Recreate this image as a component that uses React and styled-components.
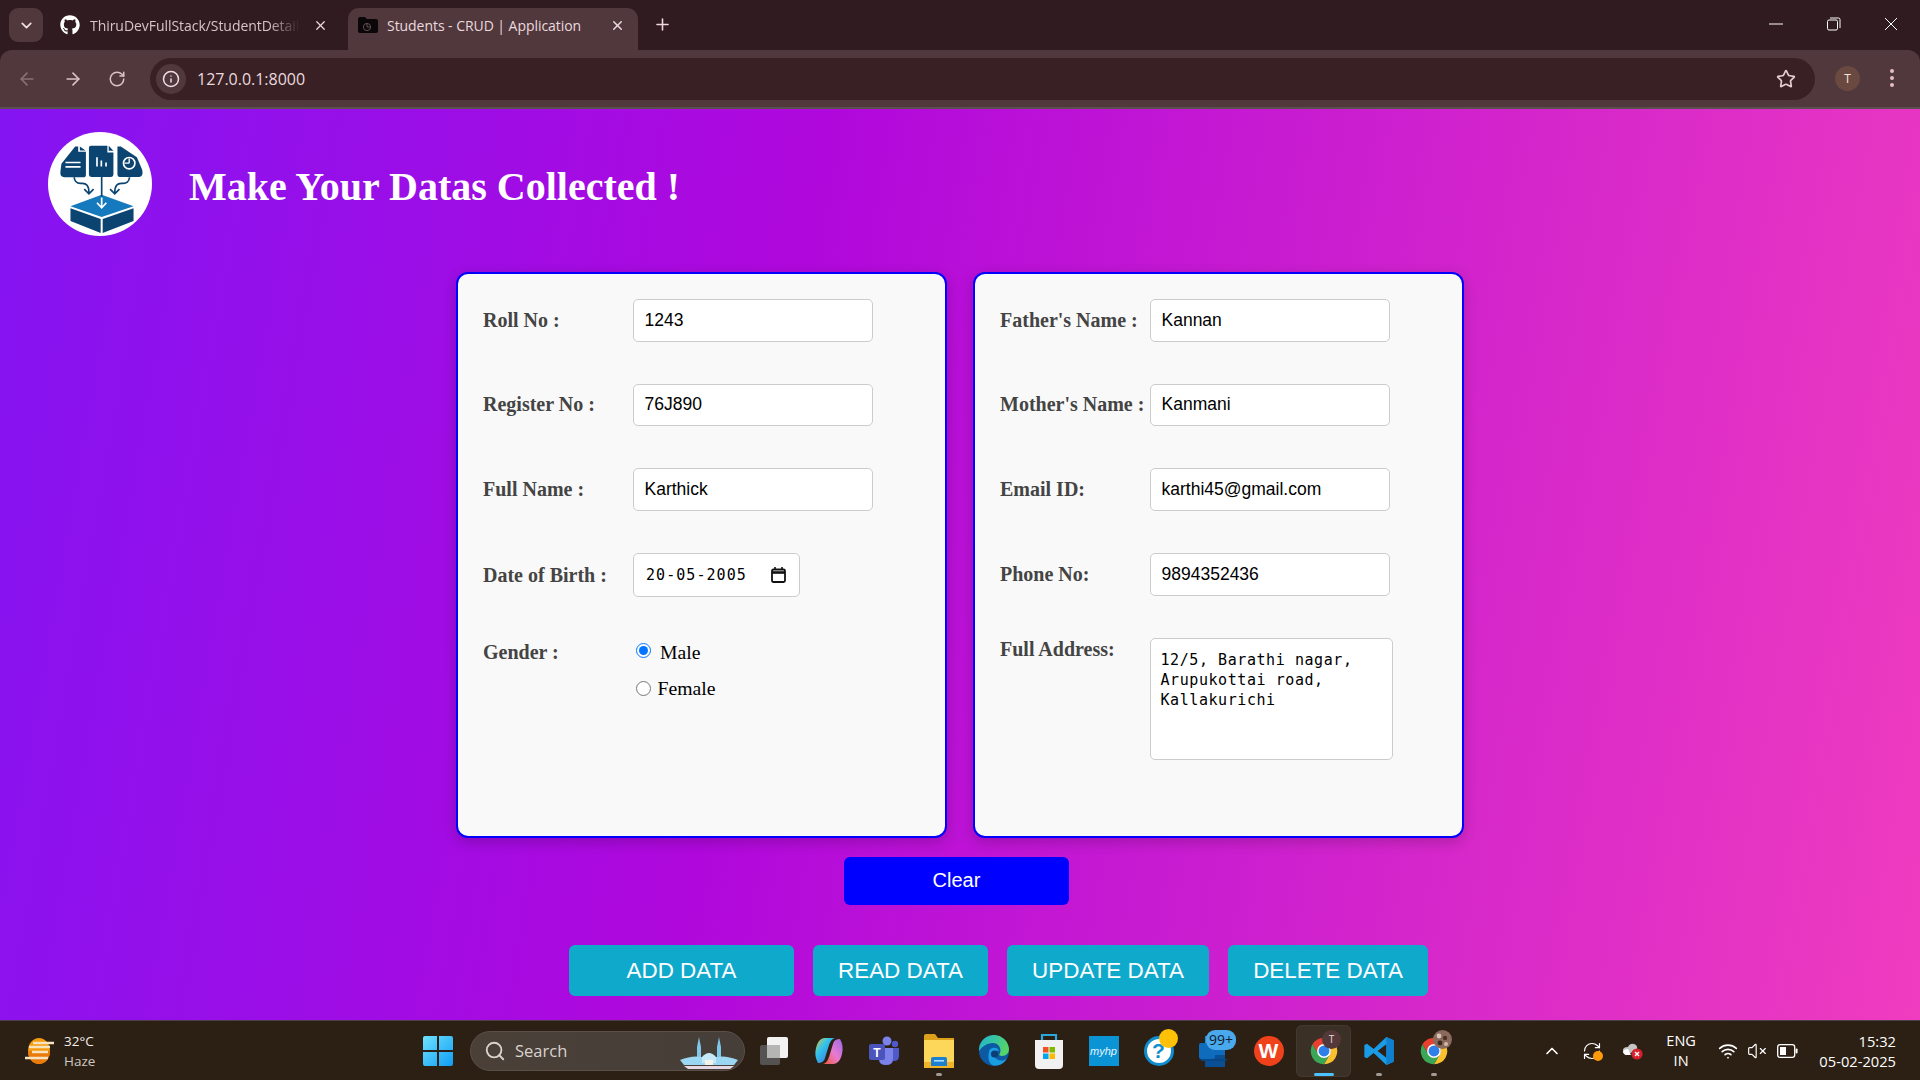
import React from "react";
import styled, { createGlobalStyle } from "styled-components";
import { ArrowLeft, ArrowRight, RotateCw, Info, Star, Plus, X, ChevronDown, ChevronUp, Search, Wifi, VolumeX, RefreshCw } from "lucide-react";
import { FaGithub } from "react-icons/fa";

const Global = createGlobalStyle`
  html, body { margin: 0; padding: 0; height: 100%; overflow: hidden; background:#2f1b20; }
  * { box-sizing: border-box; }
  #root { height: 100%; }
`;
const UI = `"Open Sans", "Noto Sans", sans-serif`;
const Screen = styled.div`width:1920px;height:1080px;display:flex;flex-direction:column;overflow:hidden;background:#2f1b20;`;

const TabStrip = styled.div`height:50px;background:#2f1b20;display:flex;align-items:flex-start;padding:8px 0 0 9px;font-family:${UI};`;
const TabMenu = styled.div`width:34px;height:34px;border-radius:9px;background:#50383d;color:#f0dfe2;display:flex;align-items:center;justify-content:center;`;
const Tab = styled.div`
  height:42px;display:flex;align-items:center;flex:none;position:relative;
  width:${p=>p.$w}px;margin-left:${p=>p.$ml}px;padding:0 0 8px ${p=>p.$pl}px;
  border-radius:11px 11px 0 0;background:${p=>p.$active?"#50383d":"transparent"};
  color:${p=>p.$active?"#eadadd":"#d8c4c8"};font-size:14px;letter-spacing:-.05px;
`;
const TabTitle = styled.span`
  margin-left:${p=>p.$ml}px;width:${p=>p.$w}px;white-space:nowrap;overflow:hidden;flex:none;
  ${p=>p.$fade?"mask-image:linear-gradient(to right,#000 85%,transparent);":""}
`;
const TabClose = styled.span`margin-left:auto;display:flex;margin-right:${p=>p.$mr}px;color:#eadadd;`;
const NewTab = styled.div`margin:7px 0 0 15px;color:#f0d8dc;display:flex;`;
const WinControls = styled.div`margin-left:auto;display:flex;color:#fff;margin-right:22px;margin-top:9px;gap:43.5px;align-items:center;height:14px;`;

const Toolbar = styled.div`
  height:59px;background:#50383d;border-radius:12px 12px 0 0;display:flex;align-items:flex-start;
  padding-top:8px;position:relative;border-bottom:2px solid #5c4f50;font-family:${UI};flex:none;
`;
const NavBtn = styled.span`width:${p=>p.$w||45}px;height:42px;display:flex;align-items:center;justify-content:center;color:${p=>p.$dim?"#8b7074":"#dcc2c7"};flex:none;`;
const AddressBar = styled.div`width:1665px;height:42px;margin-left:8px;background:#392025;border-radius:21px;display:flex;align-items:center;padding-left:6px;flex:none;`;
const InfoChip = styled.span`width:30px;height:30px;border-radius:50%;background:#50383d;color:#f0dfe2;display:flex;align-items:center;justify-content:center;flex:none;`;
const Url = styled.span`margin-left:11px;color:#eadadd;font-size:16px;letter-spacing:-.02px;`;
const StarWrap = styled.span`margin-left:auto;margin-right:19px;color:#e6cdd2;display:flex;`;
const Avatar = styled.span`width:25px;height:25px;border-radius:50%;background:#6a4a40;color:#f3e6e0;font-size:12px;display:flex;align-items:center;justify-content:center;margin:8px 0 0 20px;flex:none;`;
const Dots = styled.span`display:flex;flex-direction:column;gap:3px;margin:11px 0 0 30px;`;
const Dot = styled.i`width:4px;height:4px;border-radius:50%;background:#e8bcc6;display:block;`;

const Page = styled.main`
  flex:1;min-height:0;display:flex;flex-direction:column;
  background:linear-gradient(100deg,#8414f2 0%,#b008dc 40%,#f03cbf 100%);
`;
const Header = styled.header`display:flex;align-items:center;padding:23px 0 0 48px;gap:37px;`;
const LogoDisc = styled.svg`width:104px;height:104px;flex:none;display:block;`;
const Title = styled.h1`margin:5px 0 0;color:#fff;font:bold 40px "Liberation Serif",serif;`;
const Panels = styled.div`display:flex;justify-content:center;gap:26px;margin-top:36px;`;
const Panel = styled.section`
  width:491px;height:566px;background:#f9f9f9;border:2px solid #0000ff;border-radius:12px;padding:25px;
  box-shadow:0 4px 14px rgba(0,0,0,.2);display:flex;flex-direction:column;gap:42px;
`;
const Row = styled.div`display:flex;align-items:${p=>p.$top?"flex-start":"center"};`;
const Label = styled.label`
  width:150px;flex:none;color:#444;font:bold 20px "Liberation Serif",serif;
  ${p=>p.$offset?`margin-top:${p.$offset}px;`:""}
`;
const Field = styled.input`
  width:240px;height:42.67px;border:1px solid #ccc;border-radius:5px;background:#fff;color:#000;
  font:17.5px "Liberation Sans",sans-serif;padding:0 10.5px;outline:none;
`;
const DateBox = styled.div`width:167px;height:44.3px;border:1px solid #ccc;border-radius:5px;background:#fff;display:flex;align-items:center;padding:0 13px 0 12px;`;
const DateText = styled.input`
  width:115px;border:0;outline:none;padding:0;background:transparent;color:#000;
  font:15px "DejaVu Sans Mono",monospace;letter-spacing:1.05px;
`;
const CalIcon = styled.svg`margin-left:auto;flex:none;display:block;`;
const Area = styled.textarea`
  width:243px;height:122px;border:1px solid #ccc;border-radius:5px;background:#fff;color:#000;resize:none;outline:none;
  font:15px/20px "DejaVu Sans Mono",monospace;letter-spacing:.57px;padding:11px 9.5px;overflow:hidden;
`;
const RadioStack = styled.div`display:flex;flex-direction:column;gap:12px;margin-top:1px;`;
const RadioRow = styled.label`display:flex;align-items:center;color:#000;font:19.7px "Liberation Serif",serif;height:24px;`;
const Radio = styled.input`width:15px;height:15px;margin:0 0 ${p=>p.$lift||0}px 3px;accent-color:#0075ff;flex:none;`;
const RadioText = styled.span`margin-left:${p=>p.$ml}px;`;
const ClearBtn = styled.button`
  display:block;width:225px;height:48px;margin:19px 0 0 844px;border:0;border-radius:6px;background:#0000ff;color:#fff;
  font:20px "Liberation Sans",sans-serif;padding:0 0 2px;
`;
const Actions = styled.div`display:flex;gap:19px;margin-top:40px;padding-left:569px;`;
const ActionBtn = styled.button`
  height:51px;width:${p=>p.$w}px;border:0;border-radius:6px;background:#0fa9cc;color:#fff;padding:0;flex:none;
  font:22.4px "Liberation Sans",sans-serif;
`;

const Taskbar = styled.footer`
  height:60px;background:#2c1f14;border-top:1px solid #4b4048;display:flex;align-items:center;font-family:${UI};color:#f2efec;position:relative;flex:none;
`;
const Weather = styled.div`display:flex;align-items:center;width:423px;padding-left:24px;flex:none;`;
const WeatherText = styled.div`margin-left:9px;font-size:13.5px;line-height:20px;`;
const WeatherSub = styled.div`color:#cfc8c0;`;
const SearchBox = styled.div`
  width:275px;height:40px;margin-left:17px;border-radius:20px;border:1px solid #5b5049;background:linear-gradient(90deg,#4a4038,#463e38);
  display:flex;align-items:center;padding-left:13px;color:#d9d3ce;font-size:16.5px;flex:none;position:relative;
`;
const SearchLabel = styled.span`margin-left:9px;`;
const Scene = styled.span`position:absolute;right:6px;bottom:1px;display:flex;`;
const Apps = styled.div`display:flex;margin-left:1px;flex:none;`;
const AppCell = styled.div`
  width:55px;height:52px;display:flex;align-items:center;justify-content:center;position:relative;flex:none;border-radius:6px;
  ${p=>p.$active?"background:#3b3026;box-shadow:inset 0 0 0 1px #44392f;":""}
`;
const RunDot = styled.i`
  position:absolute;bottom:1px;left:50%;transform:translateX(-50%);height:3px;border-radius:2px;display:block;
  width:${p=>p.$on?20:6}px;background:${p=>p.$on?"#4cc2ff":"#a09a95"};
`;
const CountBadge = styled.span`position:absolute;top:5px;right:5px;background:#4aa8ec;color:#10202c;font-size:14px;line-height:16px;height:20px;padding:2px 3px;border-radius:9px;`;
const MiniAvatar = styled.span`position:absolute;top:5px;right:10px;width:19px;height:19px;border-radius:50%;background:#54393a;color:#e8dcd8;font-size:10px;display:flex;align-items:center;justify-content:center;`;
const PhotoBadge = styled.svg`position:absolute;top:5px;right:9px;`;
const Tray = styled.div`position:absolute;right:0;top:0;height:59px;display:flex;align-items:center;color:#fff;`;
const TraySlot = styled.span`display:flex;margin-right:${p=>p.$mr}px;position:relative;`;
const TrayDot = styled.i`position:absolute;right:-1px;bottom:0;width:10px;height:10px;border-radius:50%;background:#ff9a0a;display:block;`;
const Lang = styled.div`font-size:14.5px;line-height:20px;text-align:center;margin-right:22.5px;`;
const Clock = styled.div`font-size:14.7px;line-height:20px;text-align:right;margin-right:24px;`;
const MyHp = styled.span`width:30px;height:30px;background:#0a94d6;color:#e8f6fc;font:italic 11px "Liberation Sans",sans-serif;display:flex;align-items:center;justify-content:center;`;
const WpsDisc = styled.span`width:30px;height:30px;border-radius:50%;background:#f0421a;color:#fff;font:bold 21px "Liberation Sans",sans-serif;display:flex;align-items:center;justify-content:center;`;
const HelpDisc = styled.span`width:30px;height:30px;border-radius:50%;background:#fff;border:3px solid #0f8ecf;color:#0f8ecf;font:bold 21px "Liberation Sans",sans-serif;display:flex;align-items:center;justify-content:center;`;
const HelpBubble = styled.i`position:absolute;top:4px;right:8px;width:19px;height:19px;border-radius:50%;background:#ffc107;display:block;`;

const Logo = () => (
  <LogoDisc viewBox="55 37 310 310">
    <circle cx="210" cy="192" r="155" fill="#fff" />
    <path d="M95 132 L136 80 L145 80 L145 96 L168 96 L168 165 Q168 172 160 172 L104 172 Q90 172 92 155Z M150 80 L167 92 L150 92Z" fill="#0b4470" />
    <path d="M183 78 L232 78 L232 98 L250 98 L250 164 Q250 171 243 171 L184 171 Q177 171 177 164 L177 84 Q177 78 183 78Z M236 78 L250 93 L236 93Z" fill="#0b4470" />
    <path d="M262 80 L272 80 L320 112 L336 150 Q340 171 326 171 L268 171 Q262 171 262 164Z" fill="#0b4470" />
    <path d="M107 128H152M107 141H152" stroke="#fff" strokeWidth="5" />
    <path d="M201 112V140M214 122V140M228 128V140" stroke="#fff" strokeWidth="5" />
    <circle cx="297" cy="130" r="17" fill="none" stroke="#fff" strokeWidth="5" />
    <path d="M297 130V116M297 130H283" stroke="#fff" strokeWidth="4" />
    <path d="M133 172 Q135 192 155 190 Q177 188 177 218 M163 207 L177 221 L191 207" fill="none" stroke="#0b4470" strokeWidth="5" />
    <path d="M298 172 Q296 192 276 190 Q254 188 254 218 M240 207 L254 221 L268 207" fill="none" stroke="#0b4470" strokeWidth="5" />
    <path d="M122 258 L215 224 L310 258 L215 290Z" fill="#1479bd" />
    <path d="M122 264 L212 296 L212 338 L122 302Z M218 296 L310 264 L310 302 L218 338Z" fill="#0b4470" />
    <path d="M215 170V230" fill="none" stroke="#0b4470" strokeWidth="5" />
    <path d="M215 232V262 M201 248 L215 263 L229 248" fill="none" stroke="#fff" strokeWidth="5" />
  </LogoDisc>
);
const Folder = () => (
  <svg width="20" height="18" viewBox="0 0 20 18" style={{ flex: "none" }}>
    <path d="M0 3Q0 1 2 1H7L9 3H18Q20 3 20 5V15Q20 17 18 17H2Q0 17 0 15Z" fill="#0b0608" />
    <circle cx="9" cy="11" r="3.6" fill="none" stroke="#62504f" strokeWidth="1" />
    <path d="M9 11V7.5M9 11H12.5" stroke="#62504f" strokeWidth="1" />
  </svg>
);
const ChromeIcon = ({ s = 32 }) => (
  <svg width={s} height={s} viewBox="0 0 24 24">
    <path d="M3.34 7A10 10 0 0 1 20.66 7H12A5 5 0 0 0 7.67 14.5Z" fill="#e8402f" />
    <path d="M20.66 7A10 10 0 0 1 12 22L16.33 14.5A5 5 0 0 0 12 7Z" fill="#fbc02d" />
    <path d="M12 22A10 10 0 0 1 3.34 7L7.67 14.5A5 5 0 0 0 16.33 14.5Z" fill="#3aa757" />
    <circle cx="12" cy="12" r="5.2" fill="#fff" />
    <circle cx="12" cy="12" r="4.1" fill="#2f7fe8" />
  </svg>
);
const TaskView = () => (
  <svg width="30" height="30" viewBox="0 0 30 30">
    <rect x="1" y="9" width="20" height="20" rx="2" fill="#555351" />
    <rect x="8" y="1" width="21" height="21" rx="2" fill="#f2f2f2" />
    <rect x="8" y="9" width="13" height="13" fill="#b5b5b3" />
  </svg>
);
const Copilot = () => (
  <svg width="30" height="30" viewBox="0 0 30 30">
    <defs>
      <linearGradient id="cp1" x1="0" y1="0" x2="1" y2="1"><stop offset="0" stopColor="#f0c030" /><stop offset=".35" stopColor="#33c5ea" /><stop offset="1" stopColor="#3b5fe0" /></linearGradient>
      <linearGradient id="cp2" x1="0" y1="1" x2="1" y2="0"><stop offset="0" stopColor="#f25a3a" /><stop offset=".5" stopColor="#e87ad0" /><stop offset="1" stopColor="#9a6ae8" /></linearGradient>
    </defs>
    <path d="M20 28H9Q13 27 15 21L19 8Q20 3 26 3Q30 10 28 18Q26 27 20 28Z" fill="url(#cp2)" />
    <path d="M10 2H21Q17 3 15 9L11 22Q10 27 4 27Q0 20 2 12Q4 3 10 2Z" fill="url(#cp1)" />
  </svg>
);
const Teams = () => (
  <svg width="32" height="32" viewBox="0 0 32 32">
    <circle cx="19" cy="6" r="4.5" fill="#7b83eb" /><circle cx="27" cy="9" r="3.2" fill="#5059c9" />
    <path d="M22 13H31V21Q31 26 26 26T21 22Z" fill="#5059c9" /><path d="M11 13H25V24Q25 30 18 30T11 24Z" fill="#7b83eb" />
    <rect x="1" y="9" width="16" height="16" rx="2" fill="#4b53bc" />
    <text x="9" y="21.5" textAnchor="middle" fontSize="12" fontWeight="700" fontFamily="Liberation Sans" fill="#fff">T</text>
  </svg>
);
const Explorer = () => (
  <svg width="30" height="38" viewBox="0 0 30 38">
    <path d="M0 4Q0 2 2 2H11L14 6H30V10H0Z" fill="#dca01a" />
    <rect y="8" width="30" height="28" fill="#fdd75a" />
    <rect y="30" width="30" height="6" fill="#f0b429" />
    <path d="M7 27Q7 25 9 25H21Q23 25 23 27V34H7Z" fill="#1c7fd0" /><rect x="10" y="28" width="10" height="1.6" fill="#a8dcff" />
  </svg>
);
const Edge = () => (
  <svg width="32" height="32" viewBox="0 0 32 32">
    <defs><linearGradient id="eg" x1="0" y1="0" x2="1" y2=".4"><stop offset="0" stopColor="#1bb4d8" /><stop offset="1" stopColor="#55d46a" /></linearGradient></defs>
    <circle cx="16" cy="16" r="15" fill="#0c59a4" />
    <path d="M1 16A15 15 0 0 1 31 14C31 21 24 22 21 20C25 14 20 7 14 8C7 9 4 12 1 16Z" fill="url(#eg)" />
    <path d="M11 17C11 12 20 11 21 16C17 15 15 18 17 22C19 26 25 27 29 23C26 29 20 32 14 30C10 27 10 21 11 17Z" fill="#1b9de2" />
    <circle cx="16.5" cy="19" r="3.5" fill="#0c3e75" />
  </svg>
);
const Store = () => (
  <svg width="30" height="36" viewBox="0 0 30 36">
    <path d="M8 8V2H22V8" fill="none" stroke="#29a8e0" strokeWidth="2.2" />
    <path d="M1 7H29V32Q29 36 25 36H5Q1 36 1 32Z" fill="#f1f1f1" />
    <rect x="9" y="14" width="5.5" height="5.5" fill="#f25022" /><rect x="15.5" y="14" width="5.5" height="5.5" fill="#7fba00" />
    <rect x="9" y="20.5" width="5.5" height="5.5" fill="#00a4ef" /><rect x="15.5" y="20.5" width="5.5" height="5.5" fill="#ffb900" />
  </svg>
);
const Outlook = () => (
  <svg width="30" height="34" viewBox="0 0 30 34">
    <rect x="6" y="2" width="20" height="10" fill="#1a8fdc" /><rect x="6" y="11" width="20" height="11" fill="#0f6cbd" /><rect x="6" y="21" width="20" height="12" fill="#0a4f96" />
    <rect x="0" y="9" width="16" height="16" rx="2" fill="#0f6cbd" /><path d="M0 25H29L26 27H3Z" fill="#074785" />
  </svg>
);
const VsCode = () => (
  <svg width="32" height="32" viewBox="0 0 24 24">
    <path d="M17.5 1.5L23 4V20L17.5 22.5L8 13.5L3 17.5L1 16.5V7.5L3 6.5L8 10.5Z M17.5 7L11 12L17.5 17Z" fill="#1a9be6" fillRule="evenodd" />
    <path d="M17.5 1.5L23 4V20L17.5 22.5Z" fill="#0f7fd0" />
  </svg>
);
const WindowsLogo = () => (
  <svg width="30" height="30" viewBox="0 0 30 30">
    <defs><linearGradient id="wl" x1="0" y1="0" x2="1" y2="1"><stop offset="0" stopColor="#6fe3ff" /><stop offset="1" stopColor="#0f9cf5" /></linearGradient></defs>
    <path d="M0 2Q0 0 2 0H14V14H0Z M16 0H28Q30 0 30 2V14H16Z M0 16H14V30H2Q0 30 0 28Z M16 16H30V28Q30 30 28 30H16Z" fill="url(#wl)" />
  </svg>
);
const WeatherIcon = () => (
  <svg width="31" height="26" viewBox="0 0 31 26">
    <ellipse cx="15" cy="13" rx="11" ry="13" fill="#f59a0c" />
    <path d="M15 26A11 13 0 0 0 26 13H4A11 13 0 0 0 15 26Z" fill="#ea7a0a" />
    <path d="M9 5H30M5 9H26M8 14H24M1 20H24" stroke="#f7e3c0" strokeWidth="2.6" />
  </svg>
);
const Mosque = () => (
  <svg width="58" height="32" viewBox="0 0 58 32">
    <path d="M17 26V10L19 0L21 10V26ZM37 26V10L39 0L41 10V26Z" fill="#7ec6ea" />
    <path d="M0 23Q12 18 22 20H36Q46 18 58 23L54 28H4Z" fill="#9bd6f2" />
    <path d="M22 26V20Q29 12 36 20V26Z" fill="#c4e8f8" />
    <path d="M25 28V23H33V28Z" fill="#f6f2ea" /><path d="M4 29H54L50 32H8Z" fill="#e5d9e6" />
  </svg>
);
const CloudBadge = () => (
  <svg width="21" height="18" viewBox="0 0 21 18">
    <path d="M1 10Q0 5 6 5Q8 1 12 2Q16 3 15 8L4 13Q2 13 1 10Z" fill="#c5c5c5" /><path d="M1 10Q2 7 6 7L9 13H4Q2 13 1 10Z" fill="#fff" />
    <circle cx="15" cy="12" r="5.6" fill="#d6202e" /><path d="M13 10L17 14M17 10L13 14" stroke="#fff" strokeWidth="1.4" />
  </svg>
);
const BatteryIcon = () => (
  <svg width="21" height="14" viewBox="0 0 21 14">
    <rect x=".7" y=".7" width="17" height="12.6" rx="2.4" fill="none" stroke="#fff" strokeWidth="1.3" />
    <rect x="3" y="3" width="6" height="8" fill="#fff" /><rect x="18.6" y="4.5" width="2" height="5" rx="1" fill="#fff" />
  </svg>
);
const Calendar = () => (
  <CalIcon width="15" height="16" viewBox="0 0 15 16">
    <path d="M1 4Q1 2.5 2.5 2.5H12.5Q14 2.5 14 4V13.5Q14 15 12.5 15H2.5Q1 15 1 13.5Z" fill="none" stroke="#111" strokeWidth="1.8" />
    <path d="M1 5.5H14" stroke="#111" strokeWidth="2.6" /><path d="M4 0V3M11 0V3" stroke="#111" strokeWidth="1.6" />
  </CalIcon>
);
const Photo = () => (
  <PhotoBadge width="19" height="19" viewBox="0 0 19 19">
    <circle cx="9.5" cy="9.5" r="9.5" fill="#8a6a5c" />
    <circle cx="6" cy="6" r="2.4" fill="#d8c4b6" /><circle cx="12" cy="8" r="2.2" fill="#4a3228" /><circle cx="7" cy="13" r="2.4" fill="#3e2a22" /><circle cx="13" cy="14" r="2" fill="#d2b8a8" />
  </PhotoBadge>
);

const Input = ({ value }) => <Field defaultValue={value} readOnly />;

export default function App() {
  return (
    <Screen>
      <Global />
      <TabStrip>
        <TabMenu><ChevronDown size={17} strokeWidth={2.4} /></TabMenu>
        <Tab $w={296} $ml={9} $pl={8}>
          <FaGithub size={20} color="#fff" />
          <TabTitle $ml={10} $w={210} $fade>ThiruDevFullStack/StudentDetails</TabTitle>
          <TabClose $mr={20}><X size={15} /></TabClose>
        </Tab>
        <Tab $active $w={290} $ml={0} $pl={10}>
          <Folder />
          <TabTitle $ml={9} $w={205}>Students - CRUD | Application</TabTitle>
          <TabClose $mr={13}><X size={15} strokeWidth={2.4} /></TabClose>
        </Tab>
        <NewTab><Plus size={19} strokeWidth={2} /></NewTab>
        <WinControls>
          <svg width="14" height="2" viewBox="0 0 14 2"><path d="M0 1H14" stroke="#fff" /></svg>
          <svg width="14" height="14" viewBox="0 0 14 14"><rect x=".5" y="3" width="10" height="10" rx="1.5" fill="none" stroke="#fff" /><path d="M3 1H11.5Q13 1 13 2.5V11" fill="none" stroke="#fff" /></svg>
          <svg width="14" height="14" viewBox="0 0 14 14"><path d="M1 1L13 13M13 1L1 13" stroke="#fff" /></svg>
        </WinControls>
      </TabStrip>
      <Toolbar>
        <NavBtn $dim $w={54}><ArrowLeft size={20} /></NavBtn>
        <NavBtn $w={38}><ArrowRight size={20} /></NavBtn>
        <NavBtn $w={50}><RotateCw size={18} /></NavBtn>
        <AddressBar>
          <InfoChip><Info size={18} /></InfoChip>
          <Url>127.0.0.1:8000</Url>
          <StarWrap><Star size={20} /></StarWrap>
        </AddressBar>
        <Avatar>T</Avatar>
        <Dots><Dot /><Dot /><Dot /></Dots>
      </Toolbar>
      <Page>
        <Header>
          <Logo />
          <Title>Make Your Datas Collected !</Title>
        </Header>
        <Panels>
          <Panel>
            <Row><Label>Roll No :</Label><Input value="1243" /></Row>
            <Row><Label>Register No :</Label><Input value="76J890" /></Row>
            <Row><Label>Full Name :</Label><Input value="Karthick" /></Row>
            <Row><Label>Date of Birth :</Label><DateBox><DateText defaultValue="20-05-2005" readOnly /><Calendar /></DateBox></Row>
            <Row $top>
              <Label $offset={2}>Gender :</Label>
              <RadioStack>
                <RadioRow><Radio type="radio" name="g" defaultChecked $lift={3} /><RadioText $ml={9}>Male</RadioText></RadioRow>
                <RadioRow><Radio type="radio" name="g" /><RadioText $ml={6.5}>Female</RadioText></RadioRow>
              </RadioStack>
            </Row>
          </Panel>
          <Panel>
            <Row><Label>Father's Name :</Label><Input value="Kannan" /></Row>
            <Row><Label>Mother's Name :</Label><Input value="Kanmani" /></Row>
            <Row><Label>Email ID:</Label><Input value="karthi45@gmail.com" /></Row>
            <Row><Label>Phone No:</Label><Input value="9894352436" /></Row>
            <Row $top><Label>Full Address:</Label><Area defaultValue={"12/5, Barathi nagar,\nArupukottai road,\nKallakurichi"} readOnly /></Row>
          </Panel>
        </Panels>
        <ClearBtn>Clear</ClearBtn>
        <Actions>
          <ActionBtn $w={225}>ADD DATA</ActionBtn>
          <ActionBtn $w={175}>READ DATA</ActionBtn>
          <ActionBtn $w={202}>UPDATE DATA</ActionBtn>
          <ActionBtn $w={200}>DELETE DATA</ActionBtn>
        </Actions>
      </Page>
      <Taskbar>
        <Weather>
          <WeatherIcon />
          <WeatherText>32°C<WeatherSub>Haze</WeatherSub></WeatherText>
        </Weather>
        <WindowsLogo />
        <SearchBox>
          <Search size={22} />
          <SearchLabel>Search</SearchLabel>
          <Scene><Mosque /></Scene>
        </SearchBox>
        <Apps>
          <AppCell><TaskView /></AppCell>
          <AppCell><Copilot /></AppCell>
          <AppCell><Teams /></AppCell>
          <AppCell><Explorer /><RunDot /></AppCell>
          <AppCell><Edge /></AppCell>
          <AppCell><Store /></AppCell>
          <AppCell><MyHp>myhp</MyHp></AppCell>
          <AppCell><HelpDisc>?</HelpDisc><HelpBubble /></AppCell>
          <AppCell><Outlook /><CountBadge>99+</CountBadge></AppCell>
          <AppCell><WpsDisc>W</WpsDisc></AppCell>
          <AppCell $active><ChromeIcon /><MiniAvatar>T</MiniAvatar><RunDot $on /></AppCell>
          <AppCell><VsCode /><RunDot /></AppCell>
          <AppCell><ChromeIcon /><Photo /><RunDot /></AppCell>
        </Apps>
        <Tray>
          <TraySlot $mr={19.5}><ChevronUp size={20} /></TraySlot>
          <TraySlot $mr={20}><RefreshCw size={20} strokeWidth={1.4} /><TrayDot /></TraySlot>
          <TraySlot $mr={23.5}><CloudBadge /></TraySlot>
          <Lang>ENG<br />IN</Lang>
          <TraySlot $mr={9}><Wifi size={20} /></TraySlot>
          <TraySlot $mr={10}><VolumeX size={20} strokeWidth={1.4} /></TraySlot>
          <TraySlot $mr={21}><BatteryIcon /></TraySlot>
          <Clock>15:32<br />05-02-2025</Clock>
        </Tray>
      </Taskbar>
    </Screen>
  );
}
